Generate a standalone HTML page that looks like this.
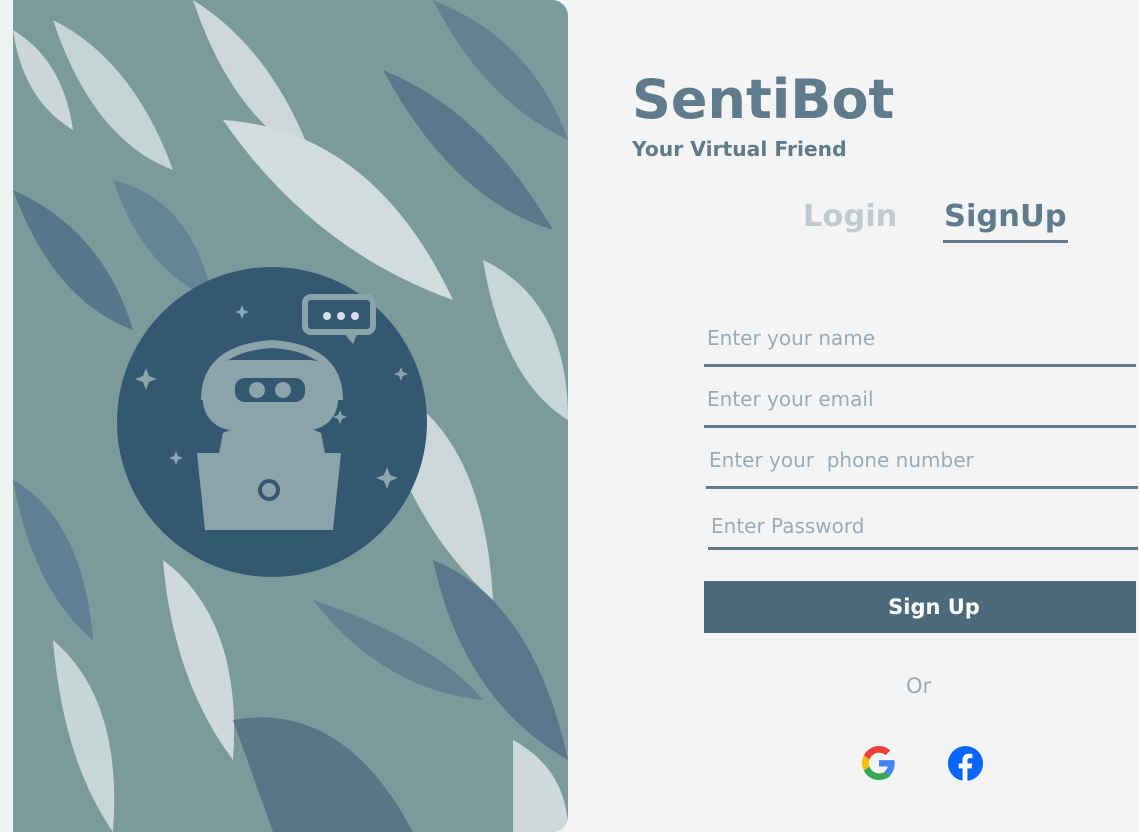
<!DOCTYPE html><html><head><style>
body{margin:0;width:1139px;height:832px;background:#f4f4f4;position:relative;overflow:hidden;font-family:"DejaVu Sans","Liberation Sans",sans-serif}
.left{position:absolute;left:13px;top:0;width:555px;height:832px;border-radius:0 16px 16px 0;overflow:hidden;background:#7b9a9b}
.strip{position:absolute;left:0;top:0;width:13px;height:832px;background:#eef1f1}
.t{position:absolute;color:#5f7b8c;font-weight:bold}
.in{position:absolute;font-size:20px;color:#9aabb8;font-family:"DejaVu Sans",sans-serif}
.ln{position:absolute;height:3px;background:#5f7b8c}
</style></head><body>
<div class="strip"></div>
<div class="left">
<svg width="555" height="832" viewBox="0 0 555 832">
<g opacity=".75">
<path d="M40 20 Q120 60 160 170 Q80 140 40 20Z" fill="#dfe6e8"/>
<path d="M180 0 Q260 50 300 160 Q220 120 180 0Z" fill="#e7ecee"/>
<path d="M210 120 Q360 130 440 300 Q300 250 210 120Z" fill="#eef2f3"/>
<path d="M370 70 Q470 110 540 230 Q440 200 370 70Z" fill="#4f6d86"/>
<path d="M420 0 Q520 40 555 140 Q470 100 420 0Z" fill="#5a7a90"/>
<path d="M0 190 Q90 230 120 330 Q40 300 0 190Z" fill="#4a6a83"/>
<path d="M100 180 Q180 200 200 300 Q130 270 100 180Z" fill="#5d7e93"/>
<path d="M360 380 Q470 420 480 600 Q390 520 360 380Z" fill="#e6ecee"/>
<path d="M420 560 Q520 600 555 760 Q450 700 420 560Z" fill="#4d6c85"/>
<path d="M0 480 Q70 520 80 640 Q20 590 0 480Z" fill="#557590"/>
<path d="M40 640 Q110 700 100 832 Q50 760 40 640Z" fill="#e2e9eb"/>
<path d="M150 560 Q230 620 220 760 Q160 680 150 560Z" fill="#e9eef0"/>
<path d="M220 720 Q330 700 400 832 L260 832Z" fill="#4b6a82"/>
<path d="M300 600 Q420 640 470 700 Q370 690 300 600Z" fill="#5a7a8f"/>
<path d="M470 260 Q555 300 555 420 Q490 380 470 260Z" fill="#e3eaec"/>
<path d="M0 30 Q50 60 60 130 Q10 100 0 30Z" fill="#e5ebed"/>
<path d="M500 740 Q555 770 555 832 L500 832Z" fill="#e8eef0"/>
</g>
<circle cx="259" cy="422" r="155" fill="#345872"/>
<g fill="#8aa4aa">
<path d="M188 400 Q188 345 259 340 Q330 345 330 400 L325 400 Q322 352 259 348 Q196 352 193 400Z"/>
<rect x="190" y="360" width="135" height="70" rx="30"/>
<path d="M210 433 Q259 410 308 433 L312 453 L206 453Z"/>
<path d="M184 453 L328 453 L320 530 L192 530Z"/>
<rect x="292" y="297" width="68" height="35" rx="6" fill="none" stroke="#8aa4aa" stroke-width="6"/>
<path d="M330 332 L340 344 L345 332Z"/>
</g>
<rect x="222" y="378" width="70" height="24" rx="10" fill="#345872"/>
<circle cx="244" cy="390" r="8" fill="#8aa4aa"/><circle cx="270" cy="390" r="8" fill="#8aa4aa"/>
<circle cx="256" cy="490" r="9" fill="none" stroke="#345872" stroke-width="4"/>
<g fill="#d8e0e3"><circle cx="314" cy="316" r="4"/><circle cx="328" cy="316" r="4"/><circle cx="342" cy="316" r="4"/></g>
<g fill="#8aa4aa"><path d="M133 368l3 8 8 3-8 3-3 8-3-8-8-3 8-3z"/><path d="M229 305l2 5 5 2-5 2-2 5-2-5-5-2 5-2z"/><path d="M374 467l3 8 8 3-8 3-3 8-3-8-8-3 8-3z"/><path d="M163 451l2 5 5 2-5 2-2 5-2-5-5-2 5-2z"/><path d="M388 367l2 5 5 2-5 2-2 5-2-5-5-2 5-2z"/><path d="M327 410l2 5 5 2-5 2-2 5-2-5-5-2 5-2z"/></g>
</svg>
</div>
<div class="t" style="left:632px;top:68px;font-size:54px">SentiBot</div>
<div class="t" style="left:632px;top:137px;font-size:20.3px">Your Virtual Friend</div>
<div class="t" style="left:803px;top:199px;font-size:30.5px;color:#c0cad1">Login</div>
<div class="t" style="left:944px;top:199px;font-size:30.5px">SignUp</div>
<div class="ln" style="left:943px;top:240px;width:125px"></div>
<div class="in" style="left:707px;top:326px">Enter your name</div><div class="ln" style="left:704px;top:364px;width:432px"></div>
<div class="in" style="left:707px;top:387px">Enter your email</div><div class="ln" style="left:704px;top:425px;width:432px"></div>
<div class="in" style="left:709px;top:448px">Enter your &nbsp;phone number</div><div class="ln" style="left:706px;top:486px;width:432px"></div>
<div class="in" style="left:711px;top:514px">Enter Password</div><div class="ln" style="left:708px;top:547px;width:430px"></div>
<div style="position:absolute;left:732px;top:581px;width:404px;height:52px;background:#4b6a7c;color:#fff;font-weight:bold;font-size:21px;text-align:center;line-height:52px;box-shadow:-28px 0 0 #4b6a7c">Sign Up</div>
<div style="position:absolute;left:906px;top:674px;font-size:21px;color:#9aabb8">Or</div>
<svg style="position:absolute;left:862px;top:746px" width="34" height="34" viewBox="0 0 48 48"><path fill="#EA4335" d="M24 9.5c3.5 0 6.6 1.2 9.1 3.6l6.8-6.8C35.8 2.4 30.3 0 24 0 14.6 0 6.6 5.4 2.7 13.3l7.9 6.1C12.5 13.6 17.8 9.5 24 9.5z"/><path fill="#4285F4" d="M46.1 24.5c0-1.6-.1-3.1-.4-4.5H24v9h12.4c-.5 2.900-2.200 5.300-4.600 7l7.400 5.800c4.300-4 6.900-9.900 6.900-17.300z"/><path fill="#FBBC05" d="M10.5 28.6c-.5-1.4-.8-3-.8-4.6s.3-3.2.8-4.6l-7.9-6.1C1 16.6 0 20.2 0 24s1 7.4 2.7 10.7l7.8-6.1z"/><path fill="#34A853" d="M24 48c6.5 0 11.9-2.1 15.9-5.8l-7.4-5.8c-2.2 1.5-5 2.3-8.5 2.3-6.2 0-11.5-4.2-13.4-9.9l-7.9 6.1C6.6 42.6 14.6 48 24 48z"/></svg>
<svg style="position:absolute;left:948px;top:746px" width="35" height="35" viewBox="0 0 36 36"><circle cx="18" cy="18" r="18" fill="#0866FF"/><path fill="#fff" d="M20 36V23h4.2l.7-5H20v-3c0-1.4.5-2.5 2.6-2.5H25V8.2c-.5-.1-2-.2-3.8-.2-3.8 0-6.2 2.3-6.2 6.5V18h-4v5h4v13z"/></svg>
</body></html>
